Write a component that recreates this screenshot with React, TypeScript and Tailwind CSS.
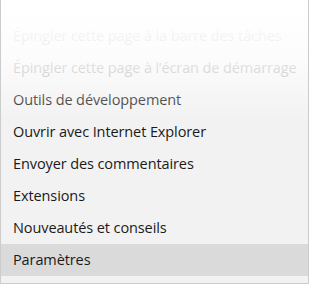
const items = [
  { label: 'Épingler cette page à la barre des tâches', disabled: true },
  { label: 'Épingler cette page à l’écran de démarrage', disabled: true },
  { label: 'Outils de développement' },
  { label: 'Ouvrir avec Internet Explorer' },
  { label: 'Envoyer des commentaires' },
  { label: 'Extensions' },
  { label: 'Nouveautés et conseils' },
  { label: 'Paramètres', active: true },
];

export default function App() {
  return (
    <div className="w-[310px] h-[285px] bg-white overflow-hidden">
      <div
        className="relative w-[309px] h-[284px] bg-[#f2f2f2] border-l border-r border-b border-[#cccccc] flex flex-col pt-[20px] overflow-hidden"
        style={{ fontFamily: '"Open Sans", "Noto Sans", sans-serif' }}
      >
        {items.map((item) => (
          <div
            key={item.label}
            className={`h-[32px] shrink-0 flex items-center pl-[12px] text-[14.5px] tracking-[-0.1px] ${
              item.active ? 'bg-[#dadada]' : ''
            } ${item.disabled ? 'text-[#a0a0a0]' : 'text-[#1a1a1a]'}`}
          >
            {item.label}
          </div>
        ))}
        <div className="absolute inset-x-0 top-0 h-[120px] bg-gradient-to-b from-white from-10% via-white/75 to-white/0 pointer-events-none" />
      </div>
    </div>
  );
}
